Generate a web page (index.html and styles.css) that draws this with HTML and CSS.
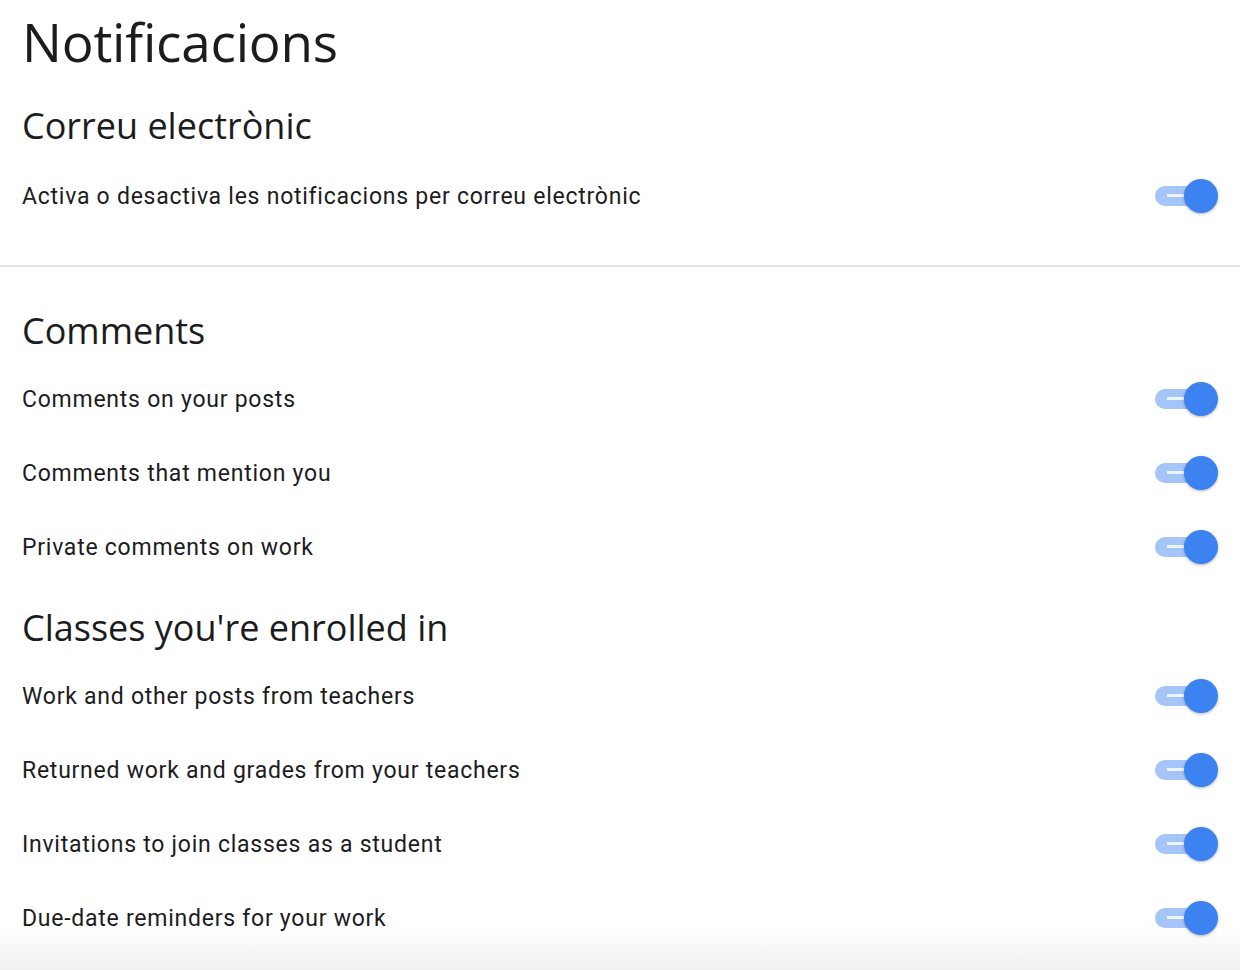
FILE: index.html
```html
<!DOCTYPE html>
<html lang="ca">
<head>
    <meta charset="UTF-8">
    <meta name="viewport" content="width=device-width, initial-scale=1.0">
    <title>Notificacions</title>
    <link rel="stylesheet" href="styles.css">
</head>
<body>
    <div class="page">
        <h1>Notificacions</h1>

        <div class="section first">
            <h2>Correu electrònic</h2>
            <div class="row">
                <span>Activa o desactiva les notificacions per correu electrònic</span>
                <span class="toggle"><span class="track"></span><span class="knob"></span></span>
            </div>
        </div>

        <hr class="divider">

        <div class="section">
            <h2>Comments</h2>
            <div class="row">
                <span>Comments on your posts</span>
                <span class="toggle"><span class="track"></span><span class="knob"></span></span>
            </div>
            <div class="row">
                <span>Comments that mention you</span>
                <span class="toggle"><span class="track"></span><span class="knob"></span></span>
            </div>
            <div class="row">
                <span>Private comments on work</span>
                <span class="toggle"><span class="track"></span><span class="knob"></span></span>
            </div>
        </div>

        <div class="section">
            <h2>Classes you're enrolled in</h2>
            <div class="row">
                <span>Work and other posts from teachers</span>
                <span class="toggle"><span class="track"></span><span class="knob"></span></span>
            </div>
            <div class="row">
                <span>Returned work and grades from your teachers</span>
                <span class="toggle"><span class="track"></span><span class="knob"></span></span>
            </div>
            <div class="row">
                <span>Invitations to join classes as a student</span>
                <span class="toggle"><span class="track"></span><span class="knob"></span></span>
            </div>
            <div class="row">
                <span>Due-date reminders for your work</span>
                <span class="toggle"><span class="track"></span><span class="knob"></span></span>
            </div>
        </div>
    </div>
</body>
</html>
```

FILE: styles.css
```css
html, body {
    margin: 0;
    padding: 0;
}
body {
    min-height: 100vh;
    background: linear-gradient(to bottom, #fff 0, #fff 925px, #f1f1f1 970px);
    color: #1c1c1e;
    font-family: Roboto, Arial, sans-serif;
}
.page {
    padding: 0 22px;
}
h1 {
    margin: 0;
    height: 84px;
    line-height: 84px;
    font-family: "Open Sans", Arial, sans-serif;
    font-weight: 400;
    font-size: 53px;
    letter-spacing: -0.2px;
}
h2 {
    margin: 0;
    height: 56px;
    line-height: 56px;
    font-family: "Open Sans", Arial, sans-serif;
    font-weight: 400;
    font-size: 36px;
    letter-spacing: 0;
}
.section h2 {
    margin-bottom: 12px;
}
.section.first h2 {
    margin-top: 14px;
    margin-bottom: 14px;
}
.section + .section {
    margin-top: 25px;
}
.divider {
    margin: 41px -22px 0;
    border: none;
    height: 2px;
    background: #e4e4e4;
}
.divider + .section {
    margin-top: 36px;
}
.row {
    display: flex;
    align-items: center;
    justify-content: space-between;
    height: 56px;
    font-size: 23px;
    letter-spacing: 0.75px;
}
.row + .row {
    margin-top: 18px;
}
.toggle {
    position: relative;
    width: 63px;
    height: 34px;
    flex-shrink: 0;
}
.track {
    position: absolute;
    left: 0;
    top: 7px;
    width: 46px;
    height: 20px;
    border-radius: 10px;
    background: #a5c4f8;
}
.track::after {
    content: "";
    position: absolute;
    left: 12px;
    top: 8px;
    width: 18px;
    height: 3px;
    background: #eef4fe;
}
.knob {
    position: absolute;
    right: 0;
    top: 0;
    width: 34px;
    height: 34px;
    border-radius: 50%;
    background: #3c82f0;
    box-shadow: 0 1px 3px rgba(0, 0, 0, 0.3);
}
```
